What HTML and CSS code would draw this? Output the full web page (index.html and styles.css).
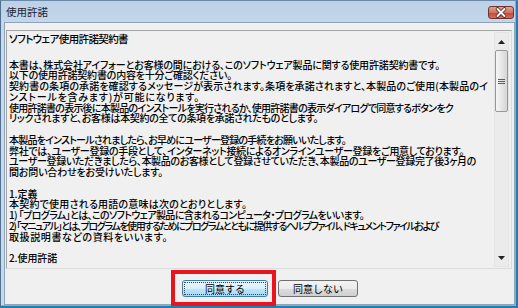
FILE: index.html
```html
<!DOCTYPE html>
<html lang="ja">
<head>
<meta charset="utf-8">
<title>使用許諾</title>
<link rel="stylesheet" href="styles.css">
</head>
<body>
<div class="window">
  <div class="titlebar">
    <span class="title">使用許諾</span>
    <span class="close">
      <svg width="26" height="13" viewBox="0 0 26 13">
        <path d="M9.5 3 L16.5 10 M16.5 3 L9.5 10" stroke="#5a1a1a" stroke-width="3.6" stroke-linecap="round"/>
        <path d="M9.5 3 L16.5 10 M16.5 3 L9.5 10" stroke="#ffffff" stroke-width="2" stroke-linecap="round"/>
      </svg>
    </span>
  </div>
  <div class="client">
    <div class="textbox">
      <div class="text">
        <div class="heading fit" data-w="119"><span>ソフトウェア使用許諾契約書</span></div>
        <div class="line fit" data-w="431"><span>本書は、株式会社アイフォーとお客様の間における、このソフトウェア製品に関する使用許諾契約書です。</span></div>
        <div class="line fit" data-w="223"><span>以下の使用許諾契約書の内容を十分ご確認ください。</span></div>
        <div class="line fit" data-w="479"><span>契約書の条項の承諾を確認するメッセージが表示されます。条項を承諾されますと、本製品のご使用(本製品のイ</span></div>
        <div class="line fit" data-w="191"><span>ンストールを含みます)が可能になります。</span></div>
        <div class="line fit" data-w="444"><span>使用許諾書の表示後に本製品のインストールを実行されるか、使用許諾書の表示ダイアログで同意するボタンをク</span></div>
        <div class="line fit" data-w="309"><span>リックされますと、お客様は本契約の全ての条項を承諾されたものとします。</span></div>
        <div class="line blank"></div>
        <div class="line fit" data-w="337"><span>本製品をインストールされましたら、お早めにユーザー登録の手続をお願いいたします。</span></div>
        <div class="line fit" data-w="455"><span>弊社では、ユーザー登録の手段として、インターネット接続によるオンラインユーザー登録をご用意しております。</span></div>
        <div class="line fit" data-w="467"><span>ユーザー登録いただきましたら、本製品のお客様として登録させていただき、本製品のユーザー登録完了後3ヶ月の</span></div>
        <div class="line fit" data-w="154"><span>間お問い合わせをお受けいたします。</span></div>
        <div class="line blank"></div>
        <div class="line"><span>1.定義</span></div>
        <div class="line fit" data-w="238"><span>本契約で使用される用語の意味は次のとおりとします。</span></div>
        <div class="line fit" data-w="355"><span>1) 「プログラム」とは、このソフトウェア製品に含まれるコンピュータ・プログラムをいいます。</span></div>
        <div class="line fit" data-w="429"><span>2) 「マニュアル」とは、プログラムを使用するためにプログラムとともに提供するヘルプファイル、ドキュメントファイルおよび</span></div>
        <div class="line fit" data-w="159"><span>取扱説明書などの資料をいいます。</span></div>
        <div class="line blank"></div>
        <div class="line"><span>2.使用許諾</span></div>
      </div>
      <div class="scrollbar">
        <div class="arrow">
          <svg width="7" height="4" viewBox="0 0 7 4"><path d="M0 4 L3.5 0 L7 4 Z" fill="#202020"/></svg>
        </div>
        <div class="track">
          <div class="thumb">
            <span class="grip"></span>
          </div>
        </div>
        <div class="arrow">
          <svg width="7" height="4" viewBox="0 0 7 4"><path d="M0 0 L7 0 L3.5 4 Z" fill="#202020"/></svg>
        </div>
      </div>
    </div>
    <div class="buttons">
      <div class="btn-wrap">
        <button class="btn btn-default"><span class="focus">同意する</span></button>
        <span class="highlight"></span>
      </div>
      <button class="btn">同意しない</button>
    </div>
  </div>
</div>
<script src="fit.js"></script>
</body>
</html>
```

FILE: styles.css
```css
html, body {
  margin: 0;
  padding: 0;
  background: #c4d6ea;
}

body {
  width: 518px;
  height: 308px;
  overflow: hidden;
  font-family: "Noto Sans CJK JP", "Noto Sans", sans-serif;
  color: #000;
}

.window {
  width: 518px;
  height: 308px;
  box-sizing: border-box;
  display: flex;
  flex-direction: column;
  background: linear-gradient(#bcd0e7, #c9dbee 40px, #c6d9ed);
  border-left: 1px solid #52708f;
  border-top: 1px solid #6c8aa8;
  border-right: 2px solid #1f7fb0;
  border-bottom: 2px solid #1f7fb0;
  box-shadow: inset -1px -1px 0 #52c4ee;
}

.titlebar {
  height: 21px;
  display: flex;
  align-items: center;
  justify-content: space-between;
  padding: 0 2px 0 5px;
  flex: none;
}

.title {
  font-size: 10.5px;
  color: #1c2430;
  line-height: 12px;
  padding-top: 1px;
}

.close {
  width: 26px;
  height: 13px;
  box-sizing: border-box;
  display: flex;
  align-items: center;
  justify-content: center;
  border: 1px solid #6e3434;
  border-radius: 3px;
  background: linear-gradient(#e4a392, #d3705f 50%, #c24a3a 55%, #d66a58);
  margin-top: 1px;
}

.close svg {
  display: block;
  margin: -1px;
}

.client {
  flex: 1;
  display: flex;
  flex-direction: column;
  margin: 0 1px 1px 3px;
  background: #f0f0f0;
  border: 1px solid #8ea3b8;
}

.textbox {
  height: 237px;
  margin: 7px 2px 0 1px;
  display: flex;
  border: 1px solid #a6a6a6;
  border-right-color: #dcdcdc;
  border-bottom-color: #dcdcdc;
  background: #f0f0f0;
  overflow: hidden;
}

.text {
  flex: 1;
  min-width: 0;
  padding: 2px 0 0 2px;
  overflow: hidden;
  font-size: 10px;
  font-weight: 500;
  font-feature-settings: "palt" 1;
  letter-spacing: -0.1px;
  line-height: 10.75px;
}

.heading {
  white-space: nowrap;
  height: 12px;
  line-height: 12px;
  margin-bottom: 14.5px;
  font-size: 10.5px;
}

.line {
  white-space: nowrap;
  height: 10.75px;
}

.scrollbar {
  width: 15px;
  flex: none;
  margin: 1px 2px 1px 0;
  display: flex;
  flex-direction: column;
  border: 1px solid #e4e4e4;
  box-sizing: border-box;
  background: #ebebeb;
}

.arrow {
  height: 17px;
  display: flex;
  align-items: center;
  justify-content: center;
  flex: none;
}

.track {
  flex: 1;
  display: flex;
  flex-direction: column;
}

.thumb {
  height: 60px;
  border: 1px solid #979797;
  border-radius: 2px;
  background: linear-gradient(90deg, #f6f6f6, #e6e6e6 50%, #d6d6d6);
  display: flex;
  align-items: center;
  justify-content: center;
}

.grip {
  width: 7px;
  height: 5px;
  background: repeating-linear-gradient(#5f5f5f 0 1px, transparent 1px 2px);
}

.buttons {
  display: flex;
  gap: 10px;
  padding-left: 177px;
  margin-top: 11px;
  align-items: flex-start;
}

.btn-wrap {
  position: relative;
  display: flex;
}

.btn {
  height: 17px;
  width: 80px;
  box-sizing: border-box;
  padding: 0;
  margin: 0;
  border: 1px solid #707070;
  border-radius: 3px;
  background: linear-gradient(#f3f3f3, #ebebeb 50%, #dddddd 51%, #cfcfcf);
  font-family: "Noto Sans CJK JP", "Noto Sans", sans-serif;
  font-size: 10px;
  line-height: 13px;
  color: #000;
  display: flex;
  align-items: center;
  justify-content: center;
}

.btn-default {
  width: 86px;
  border-color: #3c7fb1;
  background: linear-gradient(#eaf6fd, #d9f0fc 50%, #bee6fd 51%, #a7d9f5);
  padding: 1px;
}

.focus {
  flex: 1;
  align-self: stretch;
  display: flex;
  align-items: center;
  justify-content: center;
  border: 1px dotted #404040;
  border-radius: 1px;
}

.highlight {
  position: absolute;
  left: -11px;
  right: -8px;
  top: -10px;
  bottom: -9px;
  border: 4px solid #e8141e;
  pointer-events: none;
}
```

FILE: fit.js
```js
document.querySelectorAll('.fit').forEach(function (el) {
  var span = el.firstElementChild;
  if (!span) return;
  var target = parseFloat(el.dataset.w);
  var n = Array.from(span.textContent).length;
  var base = parseFloat(getComputedStyle(span).letterSpacing) || 0;
  var w = span.getBoundingClientRect().width;
  span.style.letterSpacing = (base + (target - w) / n).toFixed(3) + 'px';
});
```
